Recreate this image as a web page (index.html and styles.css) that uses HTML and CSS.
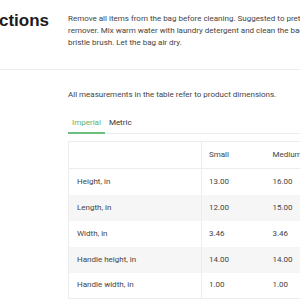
FILE: index.html
```html
<!DOCTYPE html>
<html>
<head>
<meta charset="utf-8">
<link rel="stylesheet" href="styles.css">
</head>
<body>
<section class="care">
  <div class="care-title"><h2>Instructions</h2></div>
  <p class="care-text">Remove all items from the bag before cleaning. Suggested to pretreat with stain remover. Mix warm water with laundry detergent and clean the bag with a soft bristle brush. Let the bag air dry.</p>
</section>
<section class="sizes">
  <p class="note">All measurements in the table refer to product dimensions.</p>
  <div class="tabs">
    <span class="tab active">Imperial</span>
    <span class="tab">Metric</span>
  </div>
  <table class="size-table">
    <thead>
      <tr><th class="label"></th><th>Small</th><th>Medium</th><th>Large</th></tr>
    </thead>
    <tbody>
      <tr><td class="label">Height, in</td><td>13.00</td><td>16.00</td><td>19.00</td></tr>
      <tr><td class="label">Length, in</td><td>12.00</td><td>15.00</td><td>18.00</td></tr>
      <tr><td class="label">Width, in</td><td>3.46</td><td>3.46</td><td>3.46</td></tr>
      <tr><td class="label">Handle height, in</td><td>14.00</td><td>14.00</td><td>14.00</td></tr>
      <tr><td class="label">Handle width, in</td><td>1.00</td><td>1.00</td><td>1.00</td></tr>
    </tbody>
  </table>
</section>
</body>
</html>
```
FILE: styles.css
```css
html, body {
  margin: 0;
  padding: 0;
  background: #fff;
  overflow: hidden;
}
body {
  font-family: Roboto, "Liberation Sans", sans-serif;
  color: #444;
  font-size: 8px;
  line-height: 12px;
}
.care {
  display: flex;
  gap: 19px;
  padding: 13px 0 20px 0;
  border-bottom: 1px solid #ececec;
  width: 600px;
}
.care-title {
  width: 49px;
  flex: none;
  display: flex;
  justify-content: flex-end;
}
.care-title h2 {
  margin: -2px 0 0 0;
  font-family: "Liberation Sans", Arial, sans-serif;
  font-weight: bold;
  font-size: 17px;
  line-height: 20px;
  color: #1c1c1c;
  white-space: nowrap;
}
.care-text {
  margin: 0;
  width: 290px;
  flex: none;
}
.sizes {
  padding: 19px 0 0 68px;
}
.note {
  margin: 0;
  white-space: nowrap;
}
.tabs {
  margin-top: 16px;
  display: flex;
  border-bottom: 1px solid #ececec;
  width: 400px;
}
.tab {
  padding: 0 4px 3px 4px;
  margin-bottom: -1px;
  border-bottom: 2px solid transparent;
  color: #333;
}
.tab.active {
  color: #5cb270;
  border-bottom-color: #6cc07f;
}
.size-table {
  margin-top: 7px;
  border-collapse: collapse;
  border: 1px solid #ececec;
  width: 325px;
  table-layout: fixed;
}
.size-table th,
.size-table td {
  text-align: left;
  font-weight: normal;
  padding: 0 7px;
  width: 64px;
  box-sizing: border-box;
}
.size-table th {
  height: 27px;
  border-bottom: 1px solid #ececec;
}
.size-table td {
  height: 26px;
}
.size-table .label {
  width: 133px;
  padding-left: 8px;
  border-right: 1px solid #ececec;
}
.size-table tbody tr:nth-child(even) {
  background: #f6f6f6;
}
```
